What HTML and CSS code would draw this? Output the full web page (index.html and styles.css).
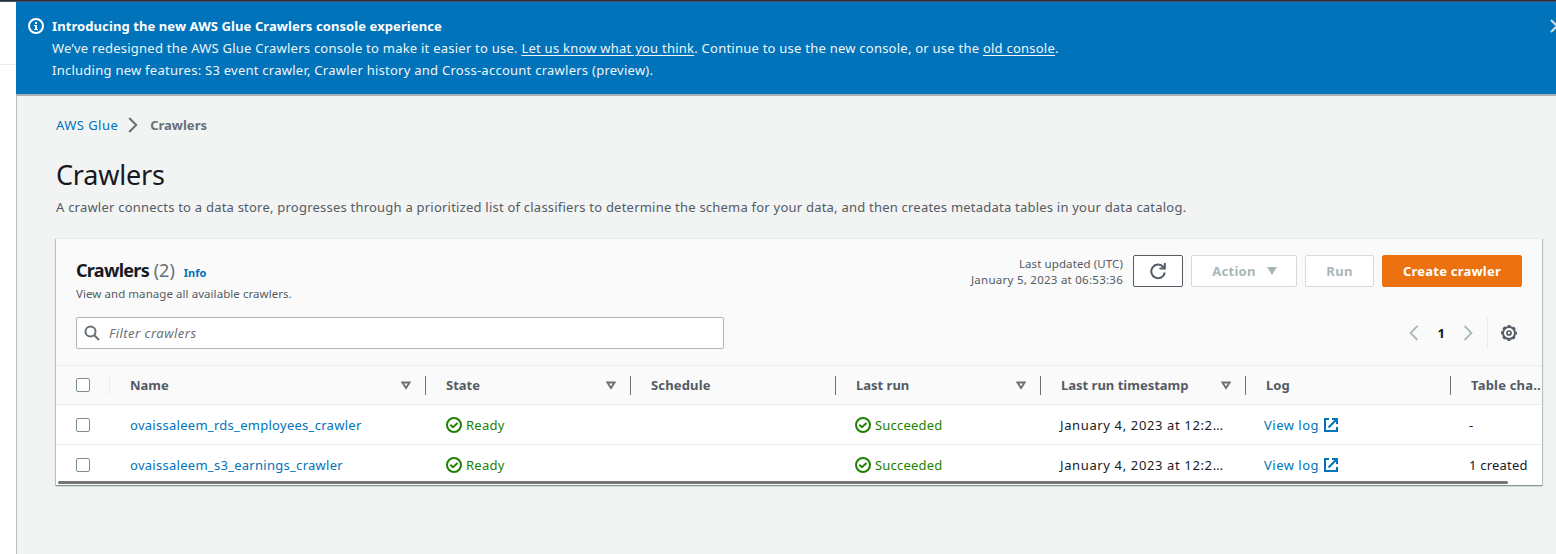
FILE: index.html
```html
<!DOCTYPE html>
<html lang="en">
<head>
<meta charset="utf-8">
<title>AWS Glue Crawlers</title>
<link rel="stylesheet" href="styles.css">
</head>
<body>
<svg width="0" height="0" class="defs">
  <symbol id="check" viewBox="0 0 16 16"><circle cx="8" cy="8" r="7" fill="none" stroke="currentColor" stroke-width="2"/><path d="M4.300 7.800l2.700 2.400 4.500-4.200" fill="none" stroke="currentColor" stroke-width="1.900"/></symbol>
  <symbol id="ext" viewBox="0 0 16 16"><path d="M6 2H2v12h12v-4M9 2h5v5M13.500 2.500L5.500 10.500" fill="none" stroke="currentColor" stroke-width="2"/></symbol>
  <symbol id="sort" viewBox="0 0 10 9"><path d="M1.400 1.500h7.200L5 7z" fill="none" stroke="currentColor" stroke-width="1.900"/></symbol>
</svg>
<div class="topbar"></div>
<div class="app">
  <aside class="side"><div class="side-head"></div></aside>
  <div class="page">
    <section class="flash">
      <svg class="info" width="16" height="16" viewBox="0 0 16 16"><circle cx="8" cy="8" r="7" fill="none" stroke="#fff" stroke-width="2"/><path d="M7 4h2v2H7zM6 7h3v4h1v1H6v-1h1V8H6z" fill="#fff"/></svg>
      <div class="flash-text">
        <div><b class="t-intro">Introducing the new AWS Glue Crawlers console experience</b></div>
        <div><span class="t-redesign">We’ve redesigned the AWS Glue Crawlers console to make it easier to use. <u>Let us know what you think</u>. Continue to use the new console, or use the <u>old console</u>.</span></div>
        <div><span class="t-features">Including new features: S3 event crawler, Crawler history and Cross-account crawlers (preview).</span></div>
      </div>
      <svg class="close" width="16" height="16" viewBox="0 0 16 16"><path d="M2 2l12 12M14 2L2 14" stroke="#d5dbdb" stroke-width="2"/></svg>
    </section>
    <main class="main">
      <nav class="crumbs"><a class="t-glue">AWS Glue</a><svg width="10" height="16" viewBox="0 0 10 16"><path d="M1.200 1L8.200 8l-7 7" fill="none" stroke="#687078" stroke-width="2"/></svg><b class="t-crumb">Crawlers</b></nav>
      <h1><span class="t-title">Crawlers</span></h1>
      <p class="desc"><span class="t-desc">A crawler connects to a data store, progresses through a prioritized list of classifiers to determine the schema for your data, and then creates metadata tables in your data catalog.</span></p>
      <section class="card">
        <header class="card-head">
          <div class="head-row">
            <div class="heading">
              <h2><span class="t-h2">Crawlers</span> <span class="count">(2)</span><a class="info-link">Info</a></h2>
              <p><span class="t-view">View and manage all available crawlers.</span></p>
            </div>
            <div class="actions">
              <div class="updated"><div class="t-upd">Last updated (UTC)</div><div class="t-date">January 5, 2023 at 06:53:36</div></div>
              <button class="btn refresh"><svg width="18" height="18" viewBox="0 0 18 18"><path d="M15.800 10.500a6.800 6.800 0 1 1-1.500-5.500l1 1.500" fill="none" stroke="#545b64" stroke-width="2"/><path d="M15.800 1v5.600H10.500" fill="none" stroke="#545b64" stroke-width="2"/></svg></button>
              <button class="btn off action"><span>Action</span><svg width="10" height="8" viewBox="0 0 10 8"><path d="M0 0h10L5 8z" fill="#aab7b8"/></svg></button>
              <button class="btn off run"><span>Run</span></button>
              <button class="btn primary"><span>Create crawler</span></button>
            </div>
          </div>
          <div class="tools">
            <div class="search"><svg width="16" height="16" viewBox="0 0 16 16"><circle cx="6.500" cy="6.500" r="5" fill="none" stroke="#687078" stroke-width="2"/><path d="M10 10l5 5" stroke="#687078" stroke-width="2"/></svg><span>Filter crawlers</span></div>
            <div class="pager">
              <svg width="10" height="16" viewBox="0 0 10 16"><path d="M8.500 1L1.500 8l7 7" fill="none" stroke="#aab7b8" stroke-width="1.800"/></svg>
              <b>1</b>
              <svg width="10" height="16" viewBox="0 0 10 16"><path d="M1.500 1l7 7-7 7" fill="none" stroke="#aab7b8" stroke-width="1.800"/></svg>
              <div class="gear"><svg width="16" height="16" viewBox="0 0 16 16"><circle cx="8" cy="8" r="6" fill="none" stroke="#545b64" stroke-width="2"/><circle cx="8" cy="8" r="7.200" fill="none" stroke="#545b64" stroke-width="1.600" stroke-dasharray="3.050 2.600" stroke-dashoffset="1.500"/><circle cx="8" cy="8" r="2" fill="none" stroke="#545b64" stroke-width="1.700"/></svg></div>
            </div>
          </div>
        </header>
        <div class="row thead">
          <div class="pick"><i class="box"></i></div>
          <div class="th"><span>Name</span><svg width="10" height="9"><use href="#sort"/></svg></div>
          <div class="th"><span>State</span><svg width="10" height="9"><use href="#sort"/></svg></div>
          <div class="th"><span class="h-sched">Schedule</span></div>
          <div class="th"><span>Last run</span><svg width="10" height="9"><use href="#sort"/></svg></div>
          <div class="th"><span>Last run timestamp</span><svg width="10" height="9"><use href="#sort"/></svg></div>
          <div class="th"><span>Log</span></div>
          <div class="th"><span class="h-table">Table cha..</span></div>
        </div>
        <div class="row">
          <div class="pick"><i class="box"></i></div>
          <div class="td"><a class="c-name">ovaissaleem_rds_employees_crawler</a></div>
          <div class="td ok"><svg width="16" height="16"><use href="#check"/></svg><span class="c-ready">Ready</span></div>
          <div class="td"></div>
          <div class="td ok shift"><svg width="16" height="16"><use href="#check"/></svg><span class="c-succ">Succeeded</span></div>
          <div class="td shift"><span class="c-time">January 4, 2023 at 12:2…</span></div>
          <div class="td shift2"><a class="c-log">View log</a><svg class="ext" width="16" height="16"><use href="#ext"/></svg></div>
          <div class="td shift2"><span>-</span></div>
        </div>
        <div class="row second">
          <div class="pick"><i class="box"></i></div>
          <div class="td"><a class="c-name">ovaissaleem_s3_earnings_crawler</a></div>
          <div class="td ok"><svg width="16" height="16"><use href="#check"/></svg><span class="c-ready">Ready</span></div>
          <div class="td"></div>
          <div class="td ok shift"><svg width="16" height="16"><use href="#check"/></svg><span class="c-succ">Succeeded</span></div>
          <div class="td shift"><span class="c-time">January 4, 2023 at 12:2…</span></div>
          <div class="td shift2"><a class="c-log">View log</a><svg class="ext" width="16" height="16"><use href="#ext"/></svg></div>
          <div class="td shift2"><span class="c-created">1 created</span></div>
        </div>
        <div class="scrollbar"></div>
      </section>
    </main>
  </div>
</div>
</body>
</html>
```
FILE: styles.css
```css
* { box-sizing: border-box; }
body { margin: 0; height: 554px; overflow: hidden; background: #f2f3f3; color: #16191f; font: 13px/22px "Noto Sans", "Open Sans", sans-serif; display: flex; flex-direction: column; }
h1, h2, p { margin: 0; font-weight: 400; }
span, a, b { white-space: nowrap; }
svg { flex: none; display: block; }
.defs { display: none; }
a { color: #0073bb; }
.topbar { height: 2px; flex: none; background: #232f3e; border-bottom: 1px solid #4b5563; }
.app { display: flex; flex: 1; min-height: 0; }
.side { width: 16px; flex: none; background: #fff; }
.side-head { height: 63px; border-bottom: 1px solid #eaeded; }
.page { flex: 1; min-width: 0; overflow: hidden; display: flex; flex-direction: column; }
.flash { height: 94px; flex: none; background: #0073bb; border-bottom: 2px solid #aab0b4; color: #fff; display: flex; padding: 13px 0 0 12px; }
.info { margin: 3px 8px 0 0; }
.flash-text { flex: 1; }
.t-intro { letter-spacing: 0.09px; }
.t-redesign { letter-spacing: 0.238px; }
.t-features { letter-spacing: 0.255px; }
.t-redesign, .t-features { color: #f1f5f7; }
u { text-underline-offset: 2px; }
.close { margin: 3px -9px 0 0; }
.main { flex: 1; padding: 18px 14px 0 39px; border-left: 1px solid #b8bfc4; }
.crumbs { display: flex; align-items: center; height: 22px; }
.crumbs svg { margin: 0 12px 0 10px; }
.crumbs b { color: #687078; }
.t-glue { letter-spacing: 0.45px; }
h1 { font-size: 27px; line-height: 36px; margin-top: 21px; }
.t-title { letter-spacing: -0.2px; }
.desc { color: #545b64; margin-top: 3px; }
.t-desc { letter-spacing: 0.22px; }
.card { margin-top: 20px; height: 247px; background: #fff; border-top: 1px solid #eaeded; box-shadow: 0 1px 1px #879596, 1px 1px 1px #c3c9cc, -1px 1px 1px #c3c9cc; overflow: hidden; }
.card-head { height: 127px; background: #fafafa; padding: 16px 20px 0; border-bottom: 1px solid #eaeded; }
.head-row { display: flex; justify-content: space-between; height: 62px; }
h2 { font-size: 18px; line-height: 30px; height: 30px; }
.t-h2 { font-weight: 700; letter-spacing: -0.7px; }
.count { color: #687078; }
.info-link { font-size: 11px; font-weight: 700; margin-left: 9px; }
.heading p { font-size: 11.500px; line-height: 16px; color: #545b64; margin-top: 1px; }
.t-view { display: block; letter-spacing: 0.06px; }
.actions { display: flex; align-items: flex-start; }
.updated { font-size: 11.500px; line-height: 16px; text-align: right; color: #545b64; margin-right: 10px; padding-top: 1px; white-space: nowrap; }
.t-upd { letter-spacing: 0.1px; }
.t-date { letter-spacing: 0.26px; }
.btn { height: 32px; padding: 0; border: 1px solid #545b64; border-radius: 2px; background: #fff; font: 700 13px/22px "Noto Sans", sans-serif; display: flex; align-items: center; justify-content: center; margin-left: 8px; }
.refresh { width: 50px; margin-left: 0; }
.off { border-color: #d5dbdb; color: #aab7b8; letter-spacing: 0.3px; }
.action { width: 106px; gap: 11px; padding-left: 1px; }
.run { width: 69px; }
.primary { width: 140px; background: #ec7211; border-color: #ec7211; color: #fff; letter-spacing: 0.22px; }
.tools { display: flex; justify-content: space-between; }
.search { width: 648px; height: 32px; border: 1px solid #aab7b8; border-radius: 2px; background: #fff; display: flex; align-items: center; padding-left: 7px; gap: 9px; color: #687078; font-style: italic; letter-spacing: 0.47px; }
.pager { display: flex; align-items: center; }
.pager b { margin: 0 18px 0 19px; }
.gear { height: 32px; display: flex; align-items: center; border-left: 1px solid #eaeded; margin-left: 14px; padding: 0 5px 0 13px; }
.row { display: grid; grid-template-columns: 54px 316px 205px 205px 205px 205px 205px 205px; height: 40px; border-bottom: 1px solid #eaeded; }
.thead { height: 39px; background: #fafafa; font-weight: 700; color: #545b64; }
.second { height: 36px; border: 0; }
.second > div { height: 40px; }
.pick { display: flex; align-items: center; padding-left: 20px; }
.thead .pick { background: linear-gradient(#eaeded, #eaeded) 53px 10px / 1px 19px no-repeat; }
.box { width: 14px; height: 14px; border: 1px solid #7d8c8d; border-radius: 2px; background: #fff; }
.th { display: flex; align-items: center; justify-content: space-between; padding: 0 15px 0 20px; background: linear-gradient(#687078, #687078) 100% 10px / 1px 19px no-repeat; }
.th svg { color: #687078; }
.h-sched { letter-spacing: 0.15px; }
.h-table { letter-spacing: 0.2px; }
.td { display: flex; align-items: center; padding-left: 20px; }
.ok { color: #1d8102; gap: 4px; }
.shift { padding-left: 19px; }
.shift2 { padding-left: 18px; }
.c-name { letter-spacing: 0.28px; }
.c-ready { letter-spacing: 0.25px; }
.c-succ { letter-spacing: 0.2px; }
.c-time { letter-spacing: 0.63px; }
.c-log { letter-spacing: 0.5px; }
.c-created { letter-spacing: 0.2px; }
.ext { color: #0073bb; margin-left: 4px; }
.scrollbar { height: 3px; width: 1450px; margin-left: 2px; background: #757575; border-radius: 2px; }
```
